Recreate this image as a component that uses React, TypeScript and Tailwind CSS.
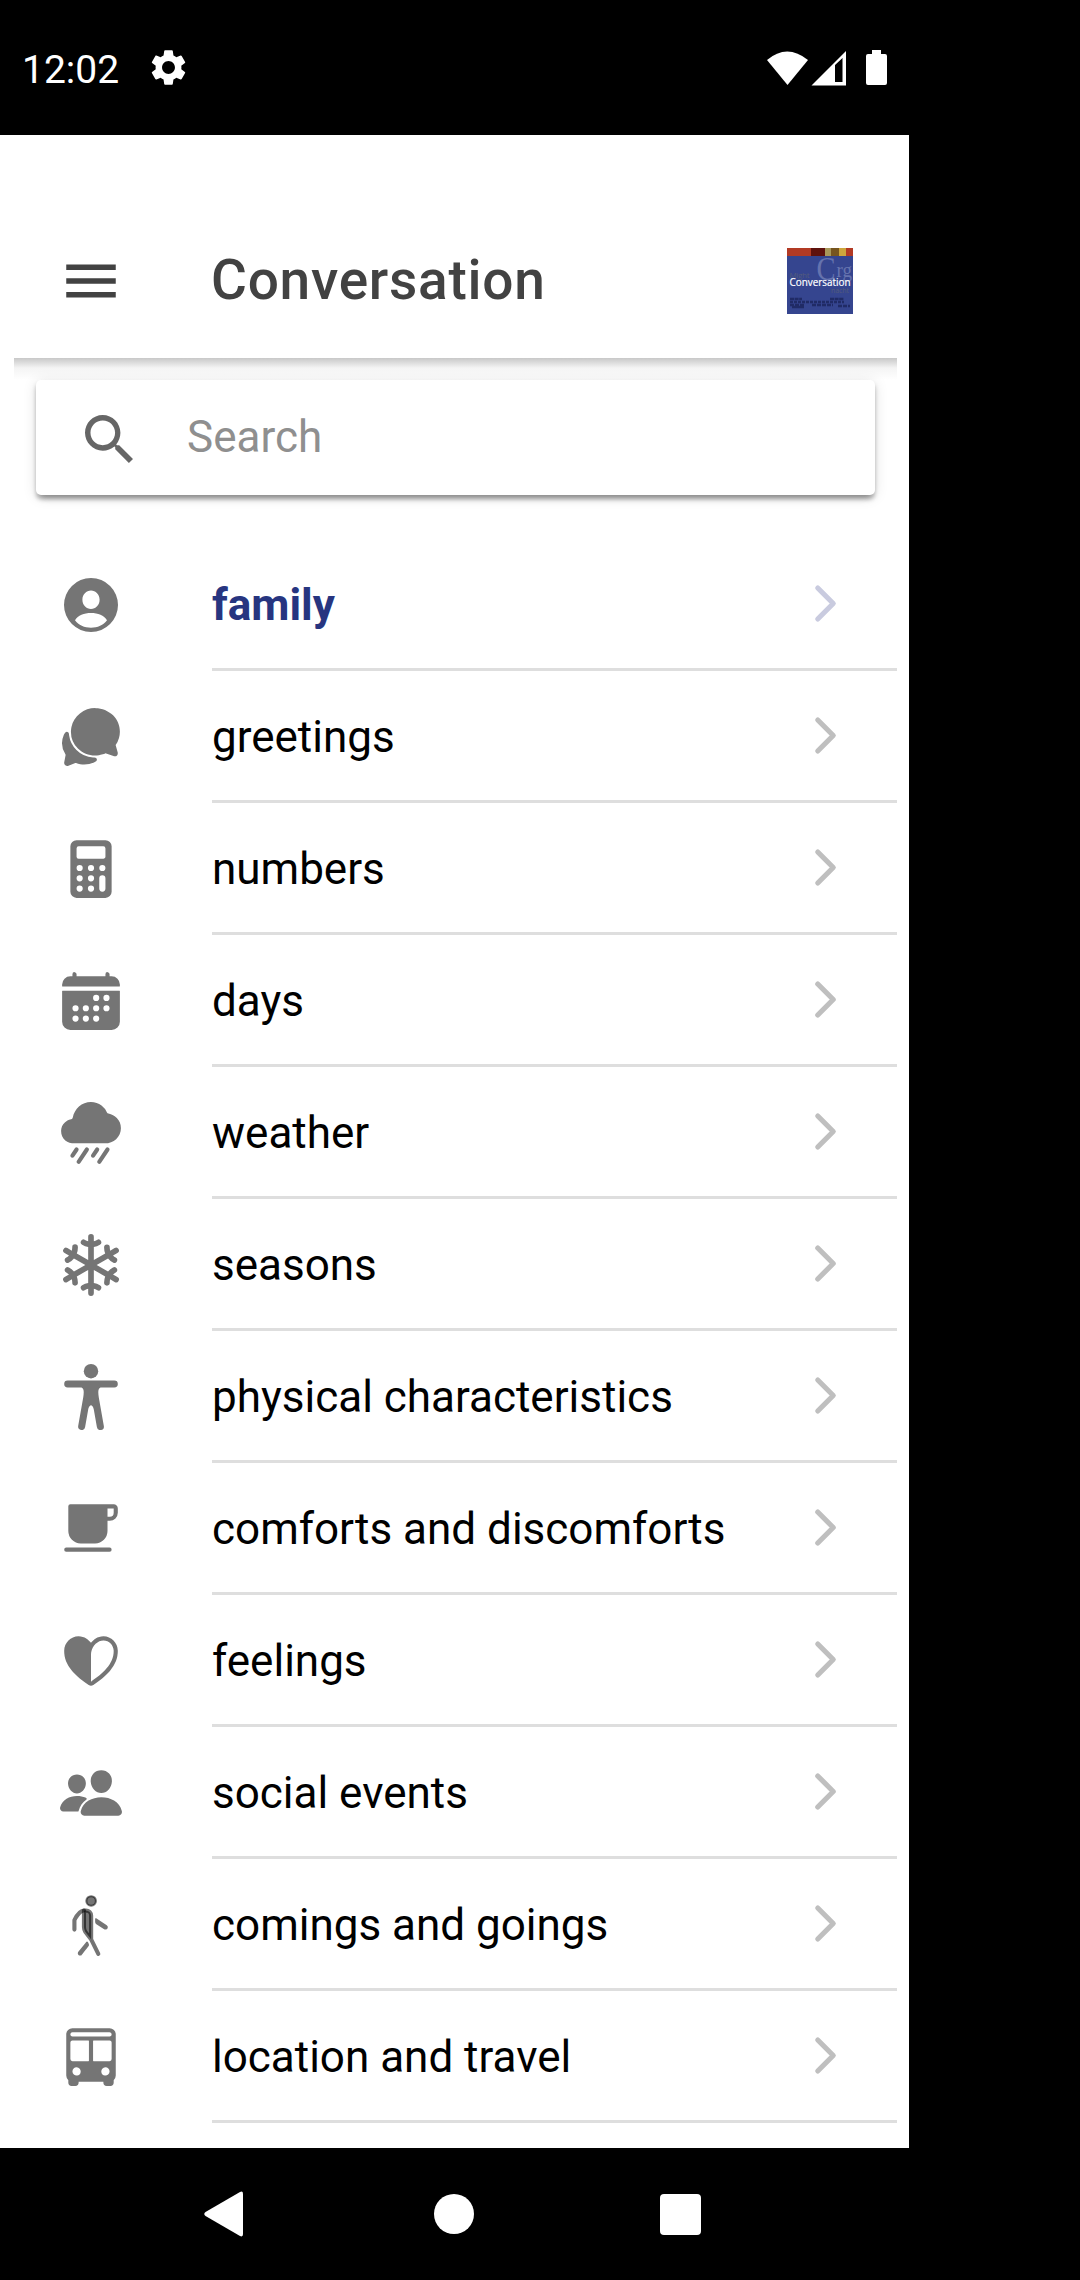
import React from "react";
import { MdMenu, MdSettings } from "react-icons/md";
import {
  IoBody, IoBus, IoCafe, IoCalculator, IoCalendar, IoChatbubbles, IoChevronForward,
  IoHeartHalf, IoPeople, IoRainy, IoSnow, IoWalk,
} from "react-icons/io5";

function ContactIcon({ className }: { className?: string }) {
  return (
    <svg className={className} viewBox="-6 -6 66 66" fill="currentColor">
      <path
        fillRule="evenodd"
        d="M27 0a27 27 0 1 0 0 54a27 27 0 1 0 0-54ZM27 12.600c4.700 0 8.600 4 8.600 9.200s-3.900 9.300-8.600 9.300s-8.600-4.100-8.600-9.300s3.900-9.200 8.600-9.200ZM11 42.200C14 37.500 20 35 27 35s13 2.500 16 7.200C39.500 47 33.500 49.700 27 49.700S14.500 47 11 42.200Z"
      />
    </svg>
  );
}

function SearchIcon({ className }: { className?: string }) {
  return (
    <svg className={className} viewBox="0 0 512 512" fill="currentColor">
      <path d="M337.509 305.372h-17.501l-6.571-5.486c20.791-25.232 33.922-57.054 33.922-93.257C347.358 127.632 283.896 64 205.135 64 127.452 64 64 127.632 64 206.629s63.452 142.628 142.225 142.628c35.011 0 67.831-13.167 92.991-34.008l6.561 5.487v17.551L415.18 448 448 415.086 337.509 305.372zm-131.284 0c-54.702 0-98.463-43.887-98.463-98.743 0-54.858 43.761-98.742 98.463-98.742 54.7 0 98.462 43.884 98.462 98.742 0 54.856-43.762 98.743-98.462 98.743z" />
    </svg>
  );
}

const topics = [
  { label: "family", Icon: ContactIcon, active: true },
  { label: "greetings", Icon: IoChatbubbles },
  { label: "numbers", Icon: IoCalculator },
  { label: "days", Icon: IoCalendar },
  { label: "weather", Icon: IoRainy },
  { label: "seasons", Icon: IoSnow },
  { label: "physical characteristics", Icon: IoBody },
  { label: "comforts and discomforts", Icon: IoCafe },
  { label: "feelings", Icon: IoHeartHalf },
  { label: "social events", Icon: IoPeople },
  { label: "comings and goings", Icon: IoWalk, translucent: true },
  { label: "location and travel", Icon: IoBus },
];

function StatusBar() {
  return (
    <div className="flex h-[135px] w-[909px] items-center bg-black pr-[22px] pl-[22px] text-white">
      <span className="pt-[5px] text-[39px] leading-none">12:02</span>
      <MdSettings className="ml-[28px] size-[43px]" />
      <svg className="ml-auto h-[36px] w-[122px]" viewBox="0 0 122 36" fill="currentColor">
        <path d="M2 10Q22 -7 43 10L22.500 35Z" />
        <path fillRule="evenodd" d="M46.500 35.500L81 1V35.500ZM70 15V32H77.500V8Z" />
        <path d="M107 0h9v4h4q2 0 2 2v27q0 2-2 2h-17q-2 0-2-2v-27q0-2 2-2h4z" />
      </svg>
    </div>
  );
}

function AppLogo() {
  return (
    <svg className="size-[66px]" viewBox="0 0 66 66">
      <rect width="66" height="66" fill="#35458f" />
      <rect width="24" height="8" fill="#b23a24" />
      <rect x="24" width="14" height="8" fill="#5e120d" />
      <rect x="38" width="6" height="8" fill="#a8985a" />
      <rect x="44" width="8" height="8" fill="#76551f" />
      <rect x="52" width="7" height="8" fill="#cda63c" />
      <rect x="59" width="7" height="8" fill="#b23a24" />
      <g fontFamily="Liberation Serif, serif" fill="#6573ae">
        <text x="29.500" y="32" fontSize="33" textLength="19" lengthAdjust="spacingAndGlyphs">C</text>
        <text x="49.500" y="28.500" fontSize="20" textLength="15.500" lengthAdjust="spacingAndGlyphs">rg</text>
      </g>
      <g fontFamily="Open Sans, sans-serif">
        <text x="2.500" y="29.500" fontSize="8" fill="#535b7c" textLength="20">Might</text>
        <text x="44" y="44.500" fontSize="7" fill="#535b7c" textLength="18">nacht</text>
        <text x="2.500" y="38" fontSize="10.500" fill="#fff" stroke="#fff" strokeWidth=".2" textLength="61" lengthAdjust="spacingAndGlyphs">Conversation</text>
      </g>
      <g stroke="#202b66" strokeWidth="2.500" fill="none">
        <path d="M3 51h12M43 51h14" strokeDasharray="4 .6" />
        <path d="M3 54h54" strokeDasharray="3 1" />
        <path d="M3 57h14M25 57h21M51 58h12" strokeDasharray="4 1" />
        <path d="M5 59h12" />
      </g>
    </svg>
  );
}

export default function App() {
  return (
    <div className="flex h-[2280px] w-[1080px] flex-col bg-black font-['Roboto',sans-serif]">
      <StatusBar />
      <main className="flex h-[2013px] w-[909px] flex-col bg-white pr-[12px] pl-[14px]">
        <header className="flex h-[223px] items-center pt-[69px] pr-[44px] pl-[44px]">
          <MdMenu className="size-[66px] text-[#424242]" />
          <h1 className="ml-[87px] flex-1 pb-[2px] text-[55px] leading-none font-medium tracking-[0.75px] text-[#424242]">
            Conversation
          </h1>
          <AppLogo />
        </header>
        <div className="h-[22px] bg-linear-to-b from-[#c8c8c8] via-[#f4f4f4] via-45% to-white" />
        <div className="mx-[22px] flex h-[115px] items-center rounded-[5px] bg-white pl-[41px] shadow-[0_8px_6px_-5px_rgba(0,0,0,0.22),0_4px_4px_rgba(0,0,0,0.25),0_2px_14px_rgba(0,0,0,0.12)]">
          <SearchIcon className="mt-[2px] size-[64px] text-[#666]" />
          <span className="ml-[46px] pb-[2px] text-[44px] leading-none text-[#8f8f8f]">Search</span>
        </div>
        <ul className="mt-[44px]">
          {topics.map(({ label, Icon, active, translucent }) => (
            <li key={label} className="flex h-[132px] items-center pl-[44px]">
              <Icon className={translucent ? "size-[66px] text-black/54" : "size-[66px] text-[#757575]"} />
              <div className="ml-[88px] flex h-full flex-1 items-center border-b-[3px] border-[#dedede] pr-[44px]">
                <span
                  className={
                    active
                      ? "flex-1 pt-[3px] text-[44px] leading-none font-bold text-[#273580]"
                      : "flex-1 pt-[3px] text-[44px] leading-none text-black"
                  }
                >
                  {label}
                </span>
                <IoChevronForward className={active ? "size-[55px] text-[#c9cbdf]" : "size-[55px] text-[#bfbfbf]"} />
              </div>
            </li>
          ))}
        </ul>
      </main>
      <nav className="flex h-[132px] w-[909px] items-center pl-[204px]">
        <svg className="h-[46px] w-[39px]" viewBox="0 0 39 46" fill="#fff">
          <path d="M1.500 21L36 1Q39-.5 39 3V43Q39 46.500 36 45L1.500 25Q-1 23 1.500 21Z" />
        </svg>
        <div className="ml-[191px] size-[40px] rounded-full bg-white" />
        <div className="ml-[186px] size-[41px] rounded-[4px] bg-white" />
      </nav>
    </div>
  );
}
